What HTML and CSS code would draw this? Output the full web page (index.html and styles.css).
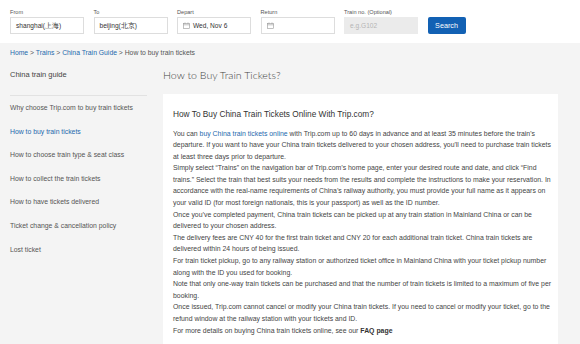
FILE: index.html
```html
<!DOCTYPE html>
<html lang="en">
<head>
  <meta charset="UTF-8">
  <meta name="viewport" content="width=device-width, initial-scale=1.0">
  <title>How to Buy Train Tickets - Trip.com</title>
  <link rel="stylesheet" href="styles.css">
</head>
<body>
  <div class="search-bar">
    <div class="field">
      <label>From</label>
      <div class="box">shanghai(上海)</div>
    </div>
    <div class="field">
      <label>To</label>
      <div class="box">beijing(北京)</div>
    </div>
    <div class="field">
      <label>Depart</label>
      <div class="box">
        <svg class="cal" viewBox="0 0 8 8" width="8" height="8">
          <rect x="0.5" y="1.5" width="7" height="6" fill="none" stroke="#999" stroke-width="0.7"/>
          <line x1="0.5" y1="3.2" x2="7.5" y2="3.2" stroke="#999" stroke-width="0.7"/>
          <line x1="2.3" y1="0.5" x2="2.3" y2="2.2" stroke="#999" stroke-width="0.7"/>
          <line x1="5.7" y1="0.5" x2="5.7" y2="2.2" stroke="#999" stroke-width="0.7"/>
        </svg>
        Wed, Nov 6
      </div>
    </div>
    <div class="field">
      <label>Return</label>
      <div class="box">
        <svg class="cal" viewBox="0 0 8 8" width="8" height="8">
          <rect x="0.5" y="1.5" width="7" height="6" fill="none" stroke="#999" stroke-width="0.7"/>
          <line x1="0.5" y1="3.2" x2="7.5" y2="3.2" stroke="#999" stroke-width="0.7"/>
          <line x1="2.3" y1="0.5" x2="2.3" y2="2.2" stroke="#999" stroke-width="0.7"/>
          <line x1="5.7" y1="0.5" x2="5.7" y2="2.2" stroke="#999" stroke-width="0.7"/>
        </svg>
      </div>
    </div>
    <div class="field">
      <label>Train no. (Optional)</label>
      <div class="box disabled">e.g.G102</div>
    </div>
    <button class="search-btn">Search</button>
  </div>

  <div class="breadcrumb">
    <a href="#">Home</a> &gt; <a href="#">Trains</a> &gt; <a href="#">China Train Guide</a> &gt; How to buy train tickets
  </div>

  <div class="layout">
    <div class="sidebar">
      <div class="side-title">China train guide</div>
      <ul class="side-menu">
        <li>Why choose Trip.com to buy train tickets</li>
        <li class="active">How to buy train tickets</li>
        <li>How to choose train type &amp; seat class</li>
        <li>How to collect the train tickets</li>
        <li>How to have tickets delivered</li>
        <li>Ticket change &amp; cancellation policy</li>
        <li>Lost ticket</li>
      </ul>
    </div>

    <div class="main">
      <h1>How to Buy Train Tickets?</h1>
      <div class="card">
        <h2>How To Buy China Train Tickets Online With Trip.com?</h2>
        <p>You can <a href="#">buy China train tickets online</a> with Trip.com up to 60 days in advance and at least 35 minutes before the train's departure. If you want to have your China train tickets delivered to your chosen address, you'll need to purchase train tickets at least three days prior to departure.</p>
        <p>Simply select “Trains” on the navigation bar of Trip.com’s home page, enter your desired route and date, and click “Find trains.” Select the train that best suits your needs from the results and complete the instructions to make your reservation. In accordance with the real-name requirements of China’s railway authority, you must provide your full name as it appears on your valid ID (for most foreign nationals, this is your passport) as well as the ID number.</p>
        <p>Once you’ve completed payment, China train tickets can be picked up at any train station in Mainland China or can be delivered to your chosen address.</p>
        <p>The delivery fees are CNY 40 for the first train ticket and CNY 20 for each additional train ticket. China train tickets are delivered within 24 hours of being issued.</p>
        <p>For train ticket pickup, go to any railway station or authorized ticket office in Mainland China with your ticket pickup number along with the ID you used for booking.</p>
        <p>Note that only one-way train tickets can be purchased and that the number of train tickets is limited to a maximum of five per booking.</p>
        <p>Once issued, Trip.com cannot cancel or modify your China train tickets. If you need to cancel or modify your ticket, go to the refund window at the railway station with your tickets and ID.</p>
        <p>For more details on buying China train tickets online, see our <a href="#" class="faq">FAQ page</a></p>
      </div>
    </div>
  </div>
</body>
</html>
```

FILE: styles.css
```css
body {
  margin: 0;
  font-family: "Liberation Sans", Arial, sans-serif;
  background-color: #f4f4f4;
  color: #333;
}
a {
  color: #2469ad;
  text-decoration: none;
}
.search-bar {
  background-color: white;
  height: 43px;
  box-sizing: border-box;
  padding: 9px 10px 0;
  display: flex;
  align-items: flex-start;
  gap: 9.5px;
}
.field label {
  display: block;
  font-size: 5.6px;
  line-height: 7px;
  color: #555;
  margin-bottom: 1px;
}
.box {
  width: 74px;
  height: 17px;
  box-sizing: border-box;
  border: 1px solid #ddd;
  padding: 0 5px;
  font-size: 6.6px;
  line-height: 15px;
  color: #333;
  display: flex;
  align-items: center;
  gap: 3px;
}
.box.disabled {
  background-color: #ebebeb;
  border-color: #ebebeb;
  color: #b5b5b5;
}
.cal {
  width: 7px;
  height: 7px;
}
.search-btn {
  margin-top: 8px;
  width: 38px;
  height: 17px;
  border: none;
  border-radius: 2px;
  background-color: #1261b4;
  color: white;
  font-family: "Liberation Sans", Arial, sans-serif;
  font-size: 7.2px;
  padding: 0;
}
.breadcrumb {
  padding: 5px 10px 0;
  font-size: 6.8px;
  line-height: 10px;
  color: #555;
}
.layout {
  display: flex;
  gap: 16px;
  padding: 0 10px;
}
.sidebar {
  width: 137px;
  flex-shrink: 0;
}
.side-title {
  padding: 11px 0 14px;
  font-size: 7.5px;
  line-height: 12px;
  color: #444;
  border-bottom: 1px solid #e2e2e2;
}
.side-menu {
  list-style: none;
  margin: 0;
  padding: 0;
}
.side-menu li {
  font-size: 6.85px;
  line-height: 9.6px;
  padding: 7px 0;
  color: #555;
}
.side-menu li.active {
  color: #2469ad;
}
.main {
  width: 395px;
}
.main h1 {
  margin: 10px 0 12px;
  font-family: Lato, "Liberation Sans", sans-serif;
  font-weight: 300;
  font-size: 10.6px;
  line-height: 14px;
  color: #444;
}
.card {
  background-color: white;
  padding: 14px 5px 20px 10px;
}
.card h2 {
  margin: 0 0 7.5px;
  font-weight: normal;
  font-size: 8.3px;
  line-height: 12px;
  color: #333;
}
.card p {
  margin: 0;
  font-size: 6.9px;
  line-height: 11.6px;
  color: #444;
}
.card .faq {
  color: #333;
  font-weight: bold;
}
```
